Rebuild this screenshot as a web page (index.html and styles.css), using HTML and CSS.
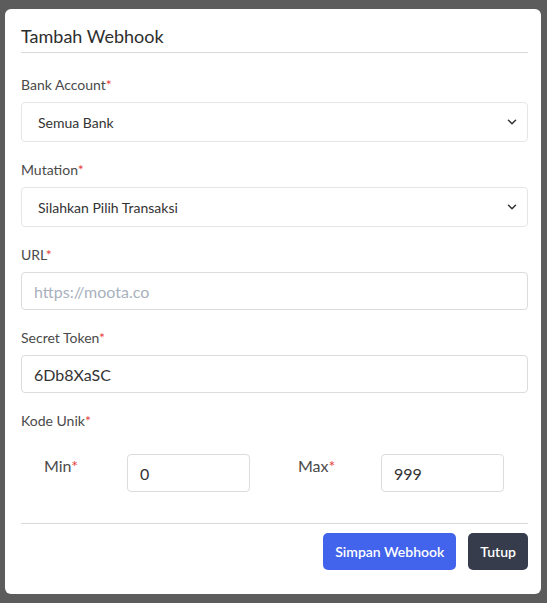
FILE: index.html
```html
<!DOCTYPE html>
<html lang="id">
<head>
<meta charset="utf-8">
<title>Tambah Webhook</title>
<link rel="stylesheet" href="styles.css">
</head>
<body>
<div class="backdrop">
  <div class="modal">
    <div class="modal-header">
      <h2 class="modal-title">Tambah Webhook</h2>
    </div>
    <form class="modal-body">
      <div class="group">
        <label class="label">Bank Account<span class="req">*</span></label>
        <div class="select">
          <span>Semua Bank</span>
          <svg class="chev" width="10" height="6" viewBox="0 0 10 6"><path d="M1.5 1.2l3.5 3.5 3.5-3.5" fill="none" stroke="#333" stroke-width="1.5" stroke-linecap="round" stroke-linejoin="round"/></svg>
        </div>
      </div>
      <div class="group">
        <label class="label">Mutation<span class="req">*</span></label>
        <div class="select">
          <span>Silahkan Pilih Transaksi</span>
          <svg class="chev" width="10" height="6" viewBox="0 0 10 6"><path d="M1.5 1.2l3.5 3.5 3.5-3.5" fill="none" stroke="#333" stroke-width="1.5" stroke-linecap="round" stroke-linejoin="round"/></svg>
        </div>
      </div>
      <div class="group">
        <label class="label">URL<span class="req">*</span></label>
        <input class="input" type="text" placeholder="https://moota.co">
      </div>
      <div class="group">
        <label class="label">Secret Token<span class="req">*</span></label>
        <input class="input" type="text" value="6Db8XaSC">
      </div>
      <div class="group">
        <label class="label">Kode Unik<span class="req">*</span></label>
        <div class="range">
          <div class="range-half">
            <span class="range-label">Min<span class="req">*</span></span>
            <input class="input small" type="text" value="0">
          </div>
          <div class="range-half">
            <span class="range-label">Max<span class="req">*</span></span>
            <input class="input small" type="text" value="999">
          </div>
        </div>
      </div>
    </form>
    <div class="modal-footer">
      <button class="btn btn-primary" type="button">Simpan Webhook</button>
      <button class="btn btn-dark" type="button">Tutup</button>
    </div>
  </div>
  <div class="edge"></div>
</div>
</body>
</html>
```
FILE: styles.css
```css
* { box-sizing: border-box; }
html, body { margin: 0; padding: 0; }
body {
  background: #5c5c5c;
  font-family: Lato, "Noto Sans", sans-serif;
  color: #333;
  width: 547px;
  height: 603px;
  overflow: hidden;
}
.backdrop {
  display: flex;
  padding: 9px 0 0 5px;
}
.modal {
  width: 536px;
  height: 585px;
  background: #fff;
  border-radius: 6px;
  padding: 14px 13px 0 16px;
  display: flex;
  flex-direction: column;
}
.edge {
  width: 6px;
  height: 585px;
}
.modal-header {
  border-bottom: 1px solid #d9d9d9;
  padding-bottom: 2px;
}
.modal-title {
  margin: 0;
  font-size: 18px;
  font-weight: 400;
  line-height: 27px;
  color: #2d2d2d;
}
.modal-body {
  margin: 22px 0 0 0;
  display: flex;
  flex-direction: column;
}
.group {
  display: flex;
  flex-direction: column;
  margin-bottom: 18px;
}
.label {
  font-size: 14px;
  line-height: 20px;
  color: #4a4a4a;
  margin-bottom: 7px;
}
.req { color: #e53e3e; }
.select {
  height: 40px;
  border: 1px solid #e6e6e6;
  border-radius: 4px;
  display: flex;
  align-items: center;
  justify-content: space-between;
  padding: 0 10px 0 16px;
  font-size: 14px;
  color: #333;
}
.chev { display: block; }
.input {
  height: 38px;
  border: 1px solid #dcdcdc;
  border-radius: 4px;
  padding: 0 12px;
  font-family: inherit;
  font-size: 16px;
  color: #333;
  background: #fff;
  outline: none;
  width: 100%;
}
.input::placeholder { color: #a9b1bd; }
.range {
  display: flex;
  margin-top: 16px;
}
.range-half {
  flex: 1;
  display: flex;
  align-items: flex-start;
  padding-left: 23px;
}
.range-half + .range-half { padding-left: 24px; }
.range-label {
  width: 83px;
  font-size: 16px;
  line-height: 20px;
  padding-top: 2px;
  color: #4a4a4a;
}
.input.small {
  width: 123px;
  padding: 0 12px 0 12px;
}
.modal-footer {
  margin-top: 13px;
  border-top: 1px solid #d9d9d9;
  padding-top: 9px;
  display: flex;
  justify-content: flex-end;
  gap: 12px;
}
.btn {
  height: 37px;
  border: none;
  border-radius: 5px;
  font-family: inherit;
  font-size: 14px;
  font-weight: 600;
  color: #fff;
  padding: 0 12px;
}
.btn-primary { background: #4263eb; }
.btn-dark { background: #363c4c; }
```
